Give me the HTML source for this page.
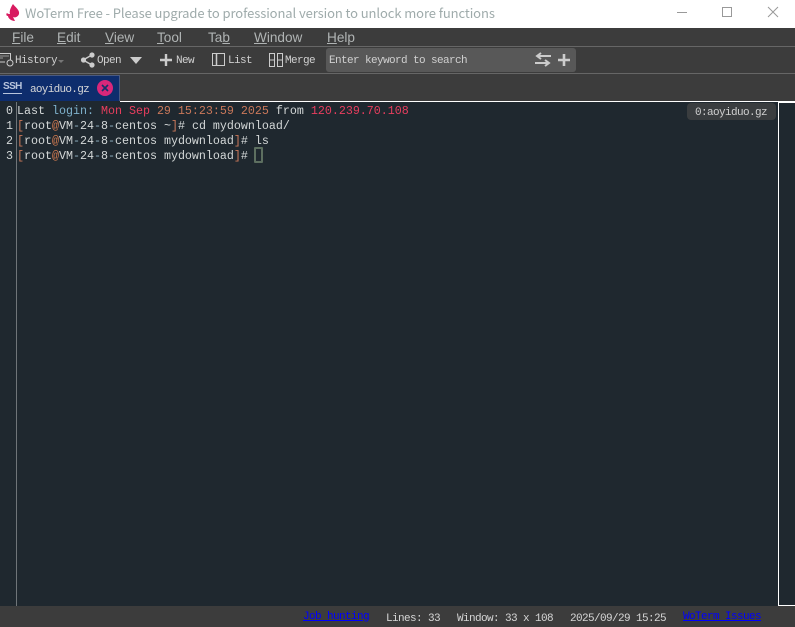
<!DOCTYPE html>
<html><head><meta charset="utf-8"><style>
*{margin:0;padding:0;box-sizing:border-box}
html,body{width:795px;height:627px;overflow:hidden;background:#3c3c3c}
.a{position:absolute;white-space:pre}
.m{font:13.6px/18px "Liberation Sans","Noto Sans CJK SC",sans-serif;color:#b0b4b4;top:29px}
.m u{text-decoration:underline}
.t{font:11px/14px "Liberation Mono",monospace;letter-spacing:-.6px;color:#d0d0d0}
.c{font:11.67px/15px "Liberation Mono",monospace;color:#d4d8d8}
.o{color:#c9785a}.r{color:#e83e5e}.b{color:#7fb2cc}.h{color:#d07a50}.d{color:#8fb0c0}
.s{font:11px/14px "Liberation Mono",monospace;letter-spacing:-.6px;color:#d6d6d6;top:612px}
.l{color:#0000ff;text-decoration:underline;top:610px}
</style></head><body>
<div class="a" style="left:0;top:0;width:795px;height:28px;background:#fff"></div>
<svg class="a" style="left:3px;top:3px" width="19" height="19" viewBox="0 0 19 19"><path d="M10 1c2 3 7 6 6 10-1 3-4 4-6 3l2 4c-4 0-7-3-7-5-2 0-2-2-1-3 1 1 2 1 3 1-1-3 1-7 3-10z" fill="#d81b60"/></svg>
<div class="a" style="left:25px;top:4px;font:13px/18px 'Noto Sans CJK SC','Liberation Sans',sans-serif;letter-spacing:-.09px;color:#9fabab">WoTerm Free - Please upgrade to professional version to unlock more functions</div>
<div class="a" style="left:677px;top:12px;width:10px;height:1px;background:#999"></div>
<div class="a" style="left:722px;top:7px;width:10px;height:10px;border:1px solid #999"></div>
<svg class="a" style="left:767px;top:6px" width="12" height="12"><path d="M1 1L11 11M11 1L1 11" stroke="#999" fill="none"/></svg>

<div class="a" style="left:0;top:46px;width:795px;height:1px;background:#666"></div>
<div class="a" style="left:0;top:73px;width:795px;height:1px;background:#666"></div>
<div class="a m" style="left:12px"><u>F</u>ile</div>
<div class="a m" style="left:57px"><u>E</u>dit</div>
<div class="a m" style="left:105px"><u>V</u>iew</div>
<div class="a m" style="left:157px"><u>T</u>ool</div>
<div class="a m" style="left:208px">Ta<u>b</u></div>
<div class="a m" style="left:254px"><u>W</u>indow</div>
<div class="a m" style="left:327px"><u>H</u>elp</div>

<svg class="a" style="left:0;top:52px" width="15" height="16"><path d="M0 1.5H10.5V10H7M0 10H5" fill="none" stroke="#ccc"/><path d="M0 4H9M0 6H3" stroke="#999"/><circle cx="10" cy="11" r="3" fill="#3c3c3c" stroke="#ccc"/></svg>
<div class="a t" style="left:15px;top:54px">History</div>
<div class="a" style="left:58px;top:60px;width:0;height:0;border:3px solid transparent;border-top-color:#777"></div>
<svg class="a" style="left:80px;top:52px" width="16" height="16"><path d="M3 8L12 3M3 8L12 13" stroke="#ccc" stroke-width="1.5"/><circle cx="3.5" cy="8" r="2.6" fill="#ccc"/><circle cx="12" cy="3" r="2.6" fill="#ccc"/><circle cx="12" cy="13" r="2.6" fill="#ccc"/></svg>
<div class="a t" style="left:97px;top:54px">Open</div>
<div class="a" style="left:130px;top:57px;width:0;height:0;border:6px solid transparent;border-top:7px solid #ccc;border-bottom:0"></div>
<svg class="a" style="left:160px;top:54px" width="12" height="12"><path d="M6 0V12M0 6H12" stroke="#ccc" stroke-width="2.4"/></svg>
<div class="a t" style="left:176px;top:54px">New</div>
<svg class="a" style="left:212px;top:53px" width="14" height="14"><rect x=".5" y=".5" width="12" height="12" fill="none" stroke="#ccc"/><path d="M4.5 1V13" stroke="#ccc" stroke-width="1.5"/></svg>
<div class="a t" style="left:228px;top:54px">List</div>
<svg class="a" style="left:269px;top:53px" width="15" height="15"><rect x=".5" y=".5" width="5" height="13" fill="none" stroke="#ccc"/><rect x="8.5" y=".5" width="5" height="13" fill="none" stroke="#ccc"/><path d="M0 7H6M8 7H14" stroke="#ccc"/></svg>
<div class="a t" style="left:285px;top:54px">Merge</div>
<div class="a" style="left:326px;top:48px;width:250px;height:24px;background:#585858;border-radius:3px"></div>
<div class="a t" style="left:329px;top:54px">Enter keyword to search</div>
<svg class="a" style="left:535px;top:52px" width="16" height="16"><path d="M16 4H3M6 1L2 4L6 7M0 11H13M10 8L14 11L10 14" stroke="#ccc" stroke-width="2" fill="none"/></svg>
<svg class="a" style="left:558px;top:54px" width="12" height="12"><path d="M6 0V12M0 6H12" stroke="#ccc" stroke-width="2.6"/></svg>

<div class="a" style="left:0;top:75px;width:120px;height:26px;background:#0e2d6d;border:1px solid #4a5a80;border-left:0;border-bottom:0"></div>
<div class="a" style="left:3px;top:81px;font:bold 10px/12px 'Liberation Sans',sans-serif;letter-spacing:-.6px;color:#b8c4dc;border-bottom:1px solid #b8c4dc">SSH</div>
<div class="a t" style="left:30px;top:83px;color:#d8d8d8;letter-spacing:-.7px">aoyiduo.gz</div>
<div class="a" style="left:97px;top:80px;width:16px;height:16px;border-radius:50%;background:#d9277a"></div>
<svg class="a" style="left:101px;top:84px" width="8" height="8"><path d="M1 1L7 7M7 1L1 7" stroke="#12306a" stroke-width="1.6"/></svg>

<div class="a" style="left:0;top:101px;width:795px;height:505px;background:#1f282f"></div>
<div class="a" style="left:120px;top:101px;width:675px;height:1px;background:#fff"></div>
<div class="a" style="left:16px;top:102px;width:1px;height:504px;background:#6f7579"></div>
<div class="a" style="left:778px;top:102px;width:17px;height:504px;border-left:1px solid #fff;border-bottom:1px solid #fff;border-top:1px solid #fff"></div>

<div class="a c" style="left:6px;top:104px">0</div>
<div class="a c" style="left:6px;top:119px">1</div>
<div class="a c" style="left:6px;top:134px">2</div>
<div class="a c" style="left:6px;top:149px">3</div>
<div class="a c" style="left:17px;top:104px">Last <span class="b">login:</span> <span class="r">Mon Sep</span> <span class="o">29 15:23:59 2025</span> from <span class="r">120.239.70.108</span></div>
<div class="a c" style="left:17px;top:119px"><span class="o">[</span>root<span class="h">@</span>VM<span class="d">-</span>24<span class="d">-</span>8<span class="d">-</span>centos ~<span class="o">]</span># cd mydownload/</div>
<div class="a c" style="left:17px;top:134px"><span class="o">[</span>root<span class="h">@</span>VM<span class="d">-</span>24<span class="d">-</span>8<span class="d">-</span>centos mydownload<span class="o">]</span># ls</div>
<div class="a c" style="left:17px;top:149px"><span class="o">[</span>root<span class="h">@</span>VM<span class="d">-</span>24<span class="d">-</span>8<span class="d">-</span>centos mydownload<span class="o">]</span>#</div>
<div class="a" style="left:254px;top:147px;width:9px;height:16px;border:2px solid #5d6f60;border-radius:1px"></div>

<div class="a" style="left:687px;top:103px;width:89px;height:17px;background:#3a3d3f;border-radius:4px"></div>
<div class="a t" style="left:695px;top:106px;color:#cfcfcf">0:aoyiduo.gz</div>

<div class="a s l" style="left:303px">Job hunting</div>
<div class="a s" style="left:386px">Lines: 33</div>
<div class="a s" style="left:457px">Window: 33 x 108</div>
<div class="a s" style="left:570px">2025/09/29 15:25</div>
<div class="a s l" style="left:683px">WoTerm Issues</div>
</body></html>
